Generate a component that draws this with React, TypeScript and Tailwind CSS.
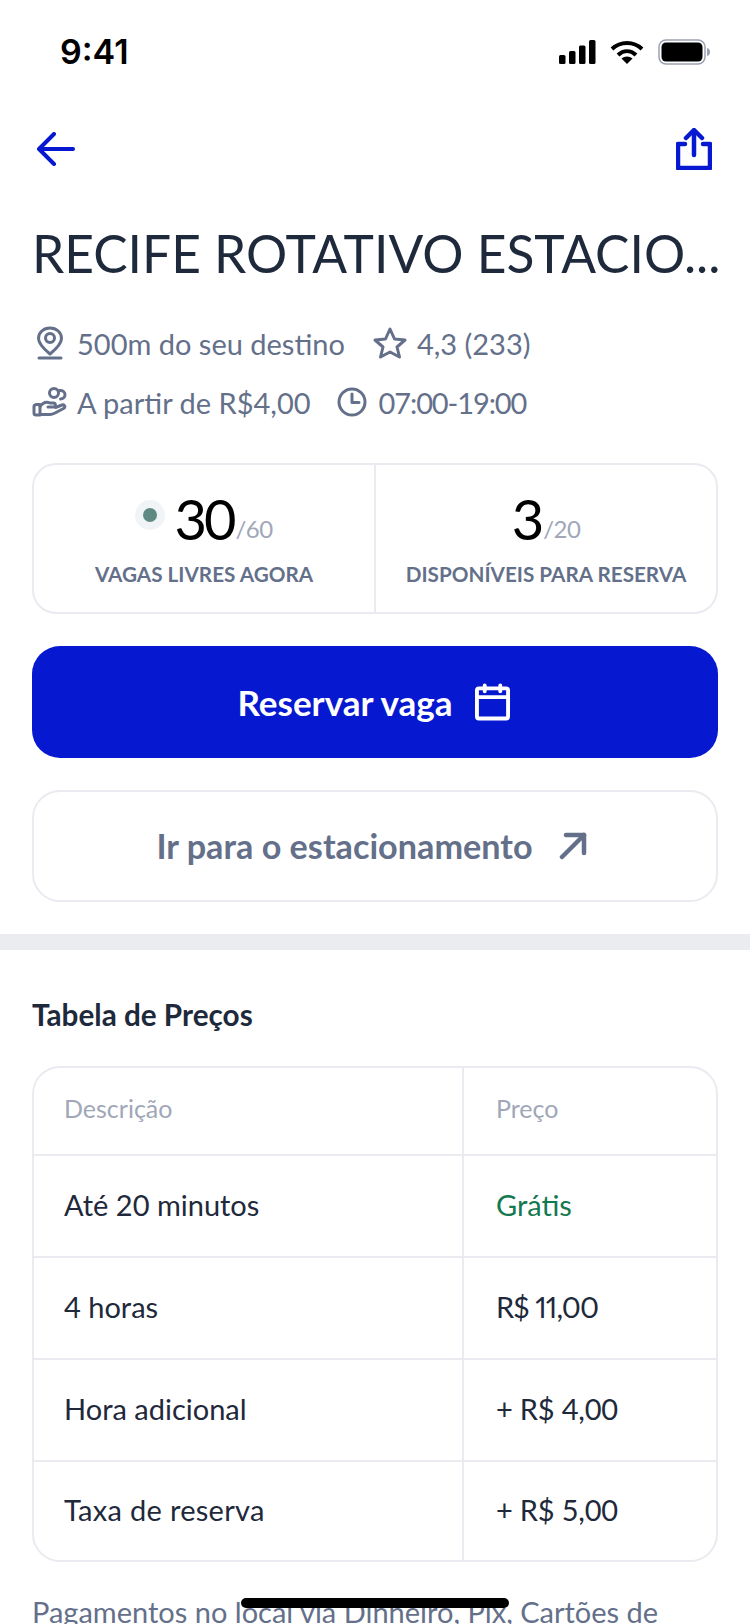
const font = "font-['Lato',sans-serif]";

function StatusBar() {
  return (
    <div className="flex h-[104px] items-center justify-between pl-[60px] pr-[40px]">
      <span className="font-['Inter',sans-serif] text-[34px] font-semibold leading-none text-black">9:41</span>
      <div className="flex items-center">
        <svg width="37" height="24" viewBox="0 0 37 24" fill="#000" className="mr-[14px]">
          <rect x="0" y="15" width="6.5" height="9" rx="1.5" />
          <rect x="10" y="11" width="6.5" height="13" rx="1.5" />
          <rect x="20" y="5.5" width="6.5" height="18.5" rx="1.5" />
          <rect x="30" y="0" width="6.5" height="24" rx="1.5" />
        </svg>
        <svg width="34" height="24" viewBox="0 0 34 24" fill="none" stroke="#000" strokeWidth="4" className="mr-[14px]">
          <path d="M2 9C10.5 1 23.5 1 32 9" />
          <path d="M8 15C13.5 10 20.5 10 26 15" />
          <path d="M17 24L11.5 18.5C14.5 15.8 19.5 15.8 22.5 18.5Z" fill="#000" stroke="none" />
        </svg>
        <svg width="52" height="26" viewBox="0 0 52 26" fill="none">
          <rect x="1" y="1" width="46" height="24" rx="7" stroke="#9aa1b0" strokeWidth="1.5" />
          <rect x="3.5" y="3.5" width="41" height="19" rx="4.5" fill="#000" />
          <path d="M49 9C51 9.6 52 11 52 13C52 15 51 16.4 49 17Z" fill="#9aa1b0" />
        </svg>
      </div>
    </div>
  );
}

function Meta({ icon, text, gap, tight }: { icon: React.ReactNode; text: string; gap: string; tight?: boolean }) {
  return (
    <div className={`flex items-center ${gap}`}>
      {icon}
      <span className={`text-[29px] leading-none text-[#64708a] ${tight ? "tracking-[-1.1px]" : ""}`}>{text}</span>
    </div>
  );
}

const stroke = {
  fill: "none",
  stroke: "#64708a",
  strokeWidth: 3,
  strokeLinecap: "round" as const,
  strokeLinejoin: "round" as const,
};

function Stat({ value, total, label, dot }: { value: string; total: string; label: string; dot?: boolean }) {
  return (
    <div className="flex flex-col items-center pt-[24px]">
      <div className="flex h-[60px] items-end">
        {dot && (
          <div className="mb-[19px] mr-[9px] flex h-[30px] w-[30px] items-center justify-center rounded-full bg-[#f1f4f6]">
            <div className="h-[14px] w-[14px] rounded-full bg-[#5f8a84]" />
          </div>
        )}
        <span className="text-[56px] leading-[60px] tracking-[-3px] text-black">{value}</span>
        <span className="mb-[6px] ml-[2px] text-[24px] leading-[28px] tracking-[-0.5px] text-[#a0a7b8]">{total}</span>
      </div>
      <span className="mt-[11px] text-[20.7px] font-bold leading-[28px] text-[#64708a]">{label}</span>
    </div>
  );
}

const rows = [
  { name: "Até 20 minutos", price: "Grátis", color: "text-[#15794f]", height: "h-[102px]", nameClass: "" },
  { name: "4 horas", price: "R$ 11,00", color: "text-[#1e293b] proportional-nums tracking-[-0.9px]", height: "h-[102px]", nameClass: "" },
  { name: "Hora adicional", price: "+ R$ 4,00", color: "text-[#1e293b] tracking-[-0.2px]", height: "h-[102px]", nameClass: "" },
  { name: "Taxa de reserva", price: "+ R$ 5,00", color: "text-[#1e293b] tracking-[-0.2px]", height: "h-[98px]", nameClass: "tracking-[0.3px]" },
];

export default function App() {
  return (
    <div className={`relative h-[1624px] w-[750px] overflow-hidden bg-white ${font}`}>
      <StatusBar />

      <div className="flex items-center justify-between pl-[37px] pr-[38px] pt-[24px]">
        <svg width="38" height="34" viewBox="0 0 38 34" fill="none" stroke="#0618d0" strokeWidth="4" strokeLinecap="round" strokeLinejoin="round">
          <path d="M36 17H3" />
          <path d="M17 2L2 17L17 32" />
        </svg>
        <svg width="36" height="42" viewBox="0 0 36 42" fill="none" stroke="#0618d0" strokeWidth="4.5" strokeLinecap="round" strokeLinejoin="round">
          <path d="M18 27V3" />
          <path d="M10 10L18 2L26 10" />
          <path d="M9 16H2V40H34V16H27" />
        </svg>
      </div>

      <div className="px-[32px]">
        <h1 className="mt-[53px] whitespace-nowrap text-[51.5px] font-normal leading-[60px] text-[#1e293b]">RECIFE ROTATIVO ESTACIO...</h1>

        <div className="mt-[43px] flex items-center gap-[28px] pl-[4px]">
          <Meta
            gap="gap-[13px]"
            text="500m do seu destino"
            icon={
              <svg width="28" height="34" viewBox="0 0 28 34" {...stroke}>
                <path d="M14 28C8 23 2.5 18 2.5 12.5C2.5 6.5 7.5 2 14 2C20.5 2 25.5 6.5 25.5 12.5C25.5 18 20 23 14 28Z" />
                <circle cx="14" cy="12" r="4.5" />
                <path d="M3 32H25" />
              </svg>
            }
          />
          <Meta
            gap="gap-[10px]"
            text="4,3 (233)"
            icon={
              <svg width="34" height="32" viewBox="0 0 34 32" {...stroke}>
                <path d="M17 2L21.5 12L32 13L24 20L26.5 30L17 25L7.5 30L10 20L2 13L12.5 12Z" />
              </svg>
            }
          />
        </div>

        <div className="mt-[27px] flex items-center gap-[26px]">
          <Meta
            gap="gap-[10px]"
            text="A partir de R$4,00"
            icon={
              <svg width="35" height="30" viewBox="0 0 35 30" {...stroke}>
                <path d="M2 19.5C2 18 3 17.5 5 17.5H8V28H4C2.5 28 2 27.5 2 26Z" />
                <path d="M8 19.5C11 15.5 15 14.5 18 16H21.5C24 16 24 20 21.5 20H16" />
                <path d="M8 27.5H18C20 27.5 21 27 23 26L31.5 21.5C34 20 32.5 17 30 18L23.5 20.5" />
                <circle cx="22" cy="6" r="4.5" />
                <path d="M27.5 3.5C30.5 3 33 5 33 7.5C33 10 31 12 28.5 12" />
              </svg>
            }
          />
          <Meta
            gap="gap-[12px]"
            text="07:00-19:00"
            tight
            icon={
              <svg width="30" height="30" viewBox="0 0 30 30" {...stroke}>
                <circle cx="15" cy="15" r="13" />
                <path d="M15 7V15.5H22" />
              </svg>
            }
          />
        </div>

        <div className="mt-[46px] grid h-[151px] grid-cols-[342px_1fr] rounded-[24px] border-2 border-[#e9ebf0]">
          <div className="border-r-2 border-[#e9ebf0]">
            <Stat value="30" total="/60" label="VAGAS LIVRES AGORA" dot />
          </div>
          <Stat value="3" total="/20" label="DISPONÍVEIS PARA RESERVA" />
        </div>

        <button className="mt-[32px] flex h-[112px] w-full items-center justify-center gap-[22px] rounded-[28px] bg-[#0618d0] pr-[3px] text-[35px] font-bold text-white">
          Reservar vaga
          <svg width="35" height="38" viewBox="0 0 36 38" fill="none" stroke="#fff" strokeWidth="4" strokeLinecap="round" strokeLinejoin="round">
            <rect x="2" y="5" width="32" height="31" rx="2" />
            <path d="M2 14H34" />
            <path d="M10 2V8M26 2V8" />
          </svg>
        </button>

        <button className="mt-[32px] flex h-[112px] w-full items-center justify-center gap-[26px] rounded-[28px] border-2 border-[#e9ebf0] bg-white pr-[7px] text-[34.2px] font-bold text-[#64708a]">
          Ir para o estacionamento
          <svg width="28" height="28" viewBox="0 0 28 28" fill="none" stroke="#64708a" strokeWidth="4.5" strokeLinecap="round" strokeLinejoin="round">
            <path d="M3 25L25 3" />
            <path d="M7 3H25V21" />
          </svg>
        </button>
      </div>

      <div className="mt-[32px] h-[16px] bg-[#eaecf0]" />

      <div className="px-[32px]">
        <h2 className="mt-[46px] text-[29.7px] font-bold leading-[38px] text-[#1e293b]">Tabela de Preços</h2>

        <div className="mt-[32px] overflow-hidden rounded-[28px] border-2 border-[#e9ebf0]">
          <div className="grid h-[88px] grid-cols-[430px_1fr] border-b-2 border-[#e9ebf0] text-[25px] text-[#a0a7b8]">
            <div className="flex items-center border-r-2 border-[#e9ebf0] pb-[4px] pl-[30px]">Descrição</div>
            <div className="flex items-center pb-[4px] pl-[32px]">Preço</div>
          </div>
          {rows.map((row, i) => (
            <div
              key={row.name}
              className={`grid ${row.height} grid-cols-[430px_1fr] text-[29px] text-[#1e293b] ${i < rows.length - 1 ? "border-b-2 border-[#e9ebf0]" : ""}`}
            >
              <div className={`flex items-center border-r-2 border-[#e9ebf0] pb-[2px] pl-[30px] ${row.nameClass}`}>{row.name}</div>
              <div className={`flex items-center pb-[2px] pl-[32px] ${row.color}`}>{row.price}</div>
            </div>
          ))}
        </div>

        <p className="mt-[32px] text-[29px] leading-[36px] text-[#64708a]">
          Pagamentos no local via Dinheiro, Pix, Cartões de crédito e débito
        </p>
      </div>

      <div className="absolute bottom-[16px] left-[241px] h-[10px] w-[268px] rounded-full bg-black" />
    </div>
  );
}
